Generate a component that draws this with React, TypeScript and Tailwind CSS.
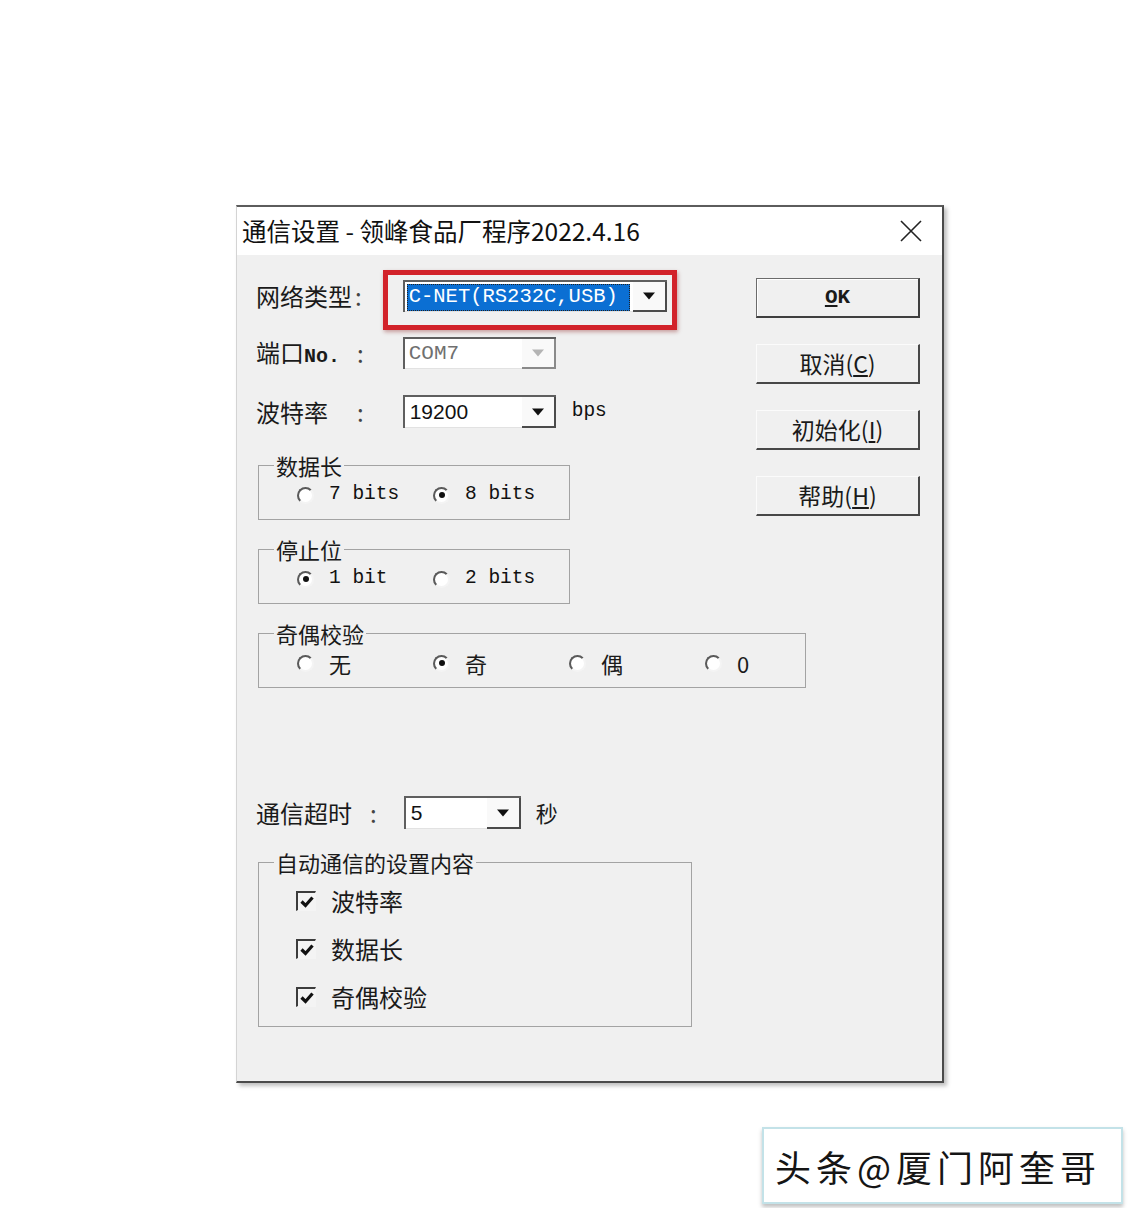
import { ReactNode } from 'react'

const cjk = "font-['Noto_Sans_CJK_SC',sans-serif]"
const mono = "font-['Liberation_Mono','Noto_Sans_CJK_SC',monospace]"

const Arrow = ({ disabled }: { disabled?: boolean }) => (
  <svg width="14" height="8" viewBox="0 0 14 8">
    <path d="M1 0.5h12L7 7.5z" fill={disabled ? '#b4b4b4' : '#111'} />
  </svg>
)

type TComboParams = {
  className: string
  children: ReactNode
  disabled?: boolean
}

const Combo = ({ className, children, disabled }: TComboParams) => (
  <div className={`flex h-[32px] border-t-2 border-l-2 border-t-[#5f5f5f] border-l-[#5f5f5f] bg-white ${className}`}>
    <div className="flex min-w-0 flex-1 items-center overflow-hidden border-b border-b-[#e2e2e2]">{children}</div>
    <div
      className={`flex w-[34px] shrink-0 items-center justify-center border-r-2 border-b-2 ${
        disabled ? 'border-r-[#8a8a8a] border-b-[#8a8a8a]' : 'border-r-[#4b4b4b] border-b-[#4b4b4b]'
      } bg-[#f9f9f9]`}
    >
      <Arrow disabled={disabled} />
    </div>
  </div>
)

const Radio = ({ checked }: { checked?: boolean }) => (
  <span className="flex h-[17px] w-[17px] shrink-0 items-center justify-center rounded-full border-2 border-t-[#5a5a5a] border-l-[#5a5a5a] border-r-[#f4f4f4] border-b-[#f4f4f4] bg-white">
    {checked && <span className="h-[6px] w-[6px] rounded-full bg-[#111]" />}
  </span>
)

const Check = () => (
  <span className="flex h-[20px] w-[20px] shrink-0 items-center justify-center border-t-2 border-l-2 border-r border-b border-t-[#3c3c3c] border-l-[#3c3c3c] border-r-[#f4f4f4] border-b-[#f4f4f4] bg-[#f4f4f4]">
    <svg width="14" height="12" viewBox="0 0 14 12">
      <path d="M1.5 5.5l4 4 7-8" fill="none" stroke="#111" strokeWidth="3.2" />
    </svg>
  </span>
)

const Group = ({ title, className, children }: { title: string; className: string; children: ReactNode }) => (
  <fieldset className={`ml-[2px] min-w-0 border border-[#a3a3a3] ${className}`}>
    <legend className={`ml-[15px] px-[2px] text-[22px] leading-[28px] text-[#1a1a1a] ${cjk}`}>{title}</legend>
    {children}
  </fieldset>
)

const RadioItem = ({ label, checked, latin, last }: { label: string; checked?: boolean; latin?: boolean; last?: boolean }) => (
  <div className={`flex items-center gap-[15px] ${last ? '' : 'w-[136px]'}`}>
    <Radio checked={checked} />
    <span
      className={
        latin ? `${mono} text-[19.5px] font-medium text-[#111]` : `${cjk} text-[22px] text-[#1a1a1a]`
      }
    >
      {label}
    </span>
  </div>
)

const Btn = ({ children, primary }: { children: ReactNode; primary?: boolean }) => (
  <div
    className={`flex h-[40px] w-[164px] items-center justify-center bg-[#f0f0f0] text-[23px] text-[#1a1a1a] ${cjk} ${
      primary
        ? 'border-t border-l border-r-2 border-b-2 border-t-[#6b6b6b] border-l-[#6b6b6b] border-r-[#3f3f3f] border-b-[#3f3f3f] shadow-[inset_1px_1px_0_#ffffff]'
        : 'border-t border-l border-r-2 border-b-2 border-t-[#fbfbfb] border-l-[#fbfbfb] border-r-[#474747] border-b-[#474747]'
    }`}
  >
    {children}
  </div>
)

const Label = ({ children, width }: { children: ReactNode; width: string }) => (
  <div className={`flex items-center text-[24px] text-[#1a1a1a] ${cjk}`}>
    <span className={`inline-block ${width}`}>{children}</span>
    <span className="text-[#444]">:</span>
  </div>
)

export default function App() {
  return (
    <div className="min-h-[1208px] bg-white pt-[205px] pl-[236px]">
      <div className="flex h-[878px] w-[708px] flex-col border-t-2 border-l border-r-2 border-b-2 border-t-[#5c5c5c] border-l-[#d4d4d4] border-r-[#4a4a4a] border-b-[#4a4a4a] shadow-[3px_3px_4px_rgba(0,0,0,0.25)]">
        <div className="flex h-[48px] shrink-0 items-center justify-between bg-white pr-[20px] pl-[5px]">
          <span className={`text-[24.5px] text-[#111] ${cjk}`}>通信设置 - 领峰食品厂程序2022.4.16</span>
          <svg width="22" height="22" viewBox="0 0 22 22">
            <path d="M1 1L21 21M21 1L1 21" stroke="#222" strokeWidth="1.6" />
          </svg>
        </div>

        <div className="flex flex-1 flex-col bg-[#f0f0f0] pt-[25px] pl-[19px]">
          <div className="flex">
            <div className="flex w-[500px] flex-col">
              <div className="flex h-[32px] items-center">
                <Label width="w-[99px]">网络类型</Label>
                <div className="relative ml-[41px]">
                  <Combo className="w-[264px]">
                    <span
                      className={`mt-[1px] ml-[2px] mr-[3px] flex h-[27px] flex-1 items-center whitespace-nowrap border border-dotted border-[#222] bg-[#0b6fd3] pl-[1px] text-[20.5px] text-white ${mono}`}
                    >
                      C-NET(RS232C,USB)
                    </span>
                  </Combo>
                  <div className="pointer-events-none absolute -top-[10px] -right-[10px] -bottom-[18px] -left-[20px] border-[5px] border-[#d2222a] shadow-[1px_2px_4px_rgba(120,0,0,0.35)]" />
                </div>
              </div>

              <div className="mt-[25px] flex h-[32px] items-center">
                <Label width="w-[101px]">
                  端口<span className={`${mono} text-[20px] font-bold`}>No.</span>
                </Label>
                <Combo className="ml-[39px] w-[153px]" disabled>
                  <span className={`pl-[4px] text-[21px] text-[#707070] ${mono}`}>COM7</span>
                </Combo>
              </div>

              <div className="mt-[26px] flex h-[33px] items-center">
                <Label width="w-[101px]">波特率</Label>
                <Combo className="ml-[39px] h-[33px] w-[153px]">
                  <span className="pl-[5px] font-['Liberation_Sans',sans-serif] text-[21px] text-[#111]">19200</span>
                </Combo>
                <span className={`ml-[16px] text-[19.5px] font-medium text-[#111] ${mono}`}>bps</span>
              </div>

              <Group title="数据长" className="mt-[23px] w-[312px] pb-[8px]">
                <div className="flex h-[32px] items-center pl-[38px]">
                  <RadioItem label="7 bits" latin />
                  <RadioItem label="8 bits" latin checked last />
                </div>
              </Group>

              <Group title="停止位" className="mt-[15px] w-[312px] pb-[8px]">
                <div className="flex h-[32px] items-center pl-[38px]">
                  <RadioItem label="1 bit" latin checked />
                  <RadioItem label="2 bits" latin last />
                </div>
              </Group>
            </div>

            <div className="-mt-[2px] flex flex-col gap-[26px]">
              <Btn primary>
                <span className={`${mono} text-[21px] font-bold`}>
                  <u>O</u>K
                </span>
              </Btn>
              <Btn>
                取消(<u>C</u>)
              </Btn>
              <Btn>
                初始化(<u>I</u>)
              </Btn>
              <Btn>
                帮助(<u>H</u>)
              </Btn>
            </div>
          </div>

          <Group title="奇偶校验" className="mt-[15px] w-[548px] pb-[8px]">
            <div className="flex h-[32px] items-center pl-[38px]">
              <RadioItem label="无" />
              <RadioItem label="奇" checked />
              <RadioItem label="偶" />
              <RadioItem label="0" last />
            </div>
          </Group>

          <div className="mt-[108px] flex h-[33px] items-center">
            <Label width="w-[114px]">通信超时</Label>
            <Combo className="ml-[27px] h-[33px] w-[117px]">
              <span className="pl-[5px] font-['Liberation_Sans',sans-serif] text-[21px] text-[#111]">5</span>
            </Combo>
            <span className={`ml-[15px] text-[22px] text-[#1a1a1a] ${cjk}`}>秒</span>
          </div>

          <Group title="自动通信的设置内容" className="mt-[19px] w-[434px] pt-[1px] pb-[5px]">
            {['波特率', '数据长', '奇偶校验'].map((label) => (
              <div key={label} className="flex h-[48px] items-center gap-[15px] pl-[37px]">
                <Check />
                <span className={`text-[24px] text-[#1a1a1a] ${cjk}`}>{label}</span>
              </div>
            ))}
          </Group>
        </div>
      </div>

      <div
        className={`mt-[44px] ml-[526px] flex h-[77px] w-[361px] items-center border-2 border-[#c3e2e8] bg-white pl-[11px] text-[36px] tracking-[5px] text-[#151515] shadow-[0_3px_4px_rgba(0,0,0,0.25)] ${cjk}`}
      >
        头条@厦门阿奎哥
      </div>
    </div>
  )
}
